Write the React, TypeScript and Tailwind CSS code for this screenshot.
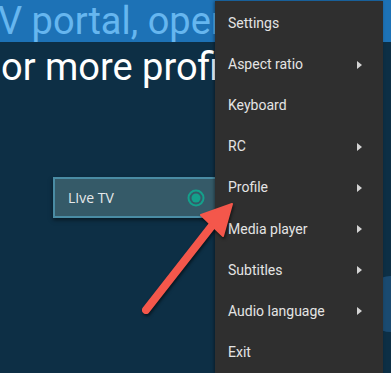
import { Fragment } from "react";

const menuItems: { label: string; sub: boolean }[] = [
  { label: "Settings", sub: false },
  { label: "Aspect ratio", sub: true },
  { label: "Keyboard", sub: false },
  { label: "RC", sub: true },
  { label: "Profile", sub: true },
  { label: "Media player", sub: true },
  { label: "Subtitles", sub: true },
  { label: "Audio language", sub: true },
  { label: "Exit", sub: false },
];

const SubArrow = () => (
  <svg width="5" height="8" viewBox="0 0 5 8" className="block">
    <path d="M0 0 L5 4 L0 8 Z" fill="#d4d4d4" />
  </svg>
);

const App = () => {
  return (
    <div
      className="relative w-[391px] h-[373px] overflow-hidden bg-[#0d2f45]"
      style={{ fontFamily: "Roboto, 'Liberation Sans', sans-serif" }}
    >
      {/* Header banner */}
      <div className="h-[42px] bg-[#1d72b6] overflow-hidden whitespace-nowrap">
        <div className="ml-[-2px] text-[38px] leading-[42px] text-[#66b6ef]">
          V portal, open
        </div>
      </div>
      <div className="mt-[3px] pl-[1px] text-[38px] leading-[45px] text-white whitespace-nowrap">
        or more profiles
      </div>

      {/* Live TV card */}
      <div className="mt-[87px] ml-[53px] w-[172px] h-[41px] flex items-center justify-between pl-[13px] pr-[18px] bg-[#355a68] border-2 border-[#4a8ca4] shadow-[0_2px_4px_rgba(0,0,0,0.5)]">
        <span
          className="text-[14px] text-[#e6e9ea]"
          style={{ fontFamily: "'Open Sans', 'Liberation Sans', sans-serif" }}
        >
          LIve TV
        </span>
        <svg width="18" height="18" viewBox="0 0 18 18">
          <circle cx="9" cy="9" r="7.5" fill="none" stroke="#14a08b" strokeWidth="2" />
          <circle cx="9" cy="9" r="4.5" fill="#14a08b" />
        </svg>
      </div>

      {/* right edge bulge */}
      <div className="absolute left-[370px] top-[276px] w-[40px] h-[56px] rounded-full bg-[#1a4a70]" />
      <div className="absolute left-[383px] top-0 w-[8px] h-[42px] bg-[#1d72b6]" />

      {/* Overlay menu */}
      <div className="absolute left-[215px] top-[1px] bottom-0 w-[168px] bg-[#2f2f2f] pt-[2px] shadow-[-1px_0_3px_rgba(0,0,0,0.4)]">
        {menuItems.map((item) => (
          <Fragment key={item.label}>
            <div className="h-[41.1px] flex items-center justify-between pl-[13px] pr-[21px]">
              <span className="text-[14px] text-[#e4e4e4]">{item.label}</span>
              {item.sub && <SubArrow />}
            </div>
          </Fragment>
        ))}
      </div>

      {/* Annotation arrow */}
      <svg
        className="absolute left-0 top-0 pointer-events-none"
        width="391"
        height="373"
        viewBox="0 0 391 373"
        style={{ filter: "drop-shadow(1px 2px 1.5px rgba(0,0,0,0.55))" }}
      >
        <line x1="146" y1="310" x2="218" y2="218" stroke="#f4574b" strokeWidth="8" strokeLinecap="round" />
        <path d="M232 204 L201 215 L223 236 Z" fill="#f4574b" stroke="#f4574b" strokeWidth="2" strokeLinejoin="round" />
      </svg>
    </div>
  );
};

export default App;
